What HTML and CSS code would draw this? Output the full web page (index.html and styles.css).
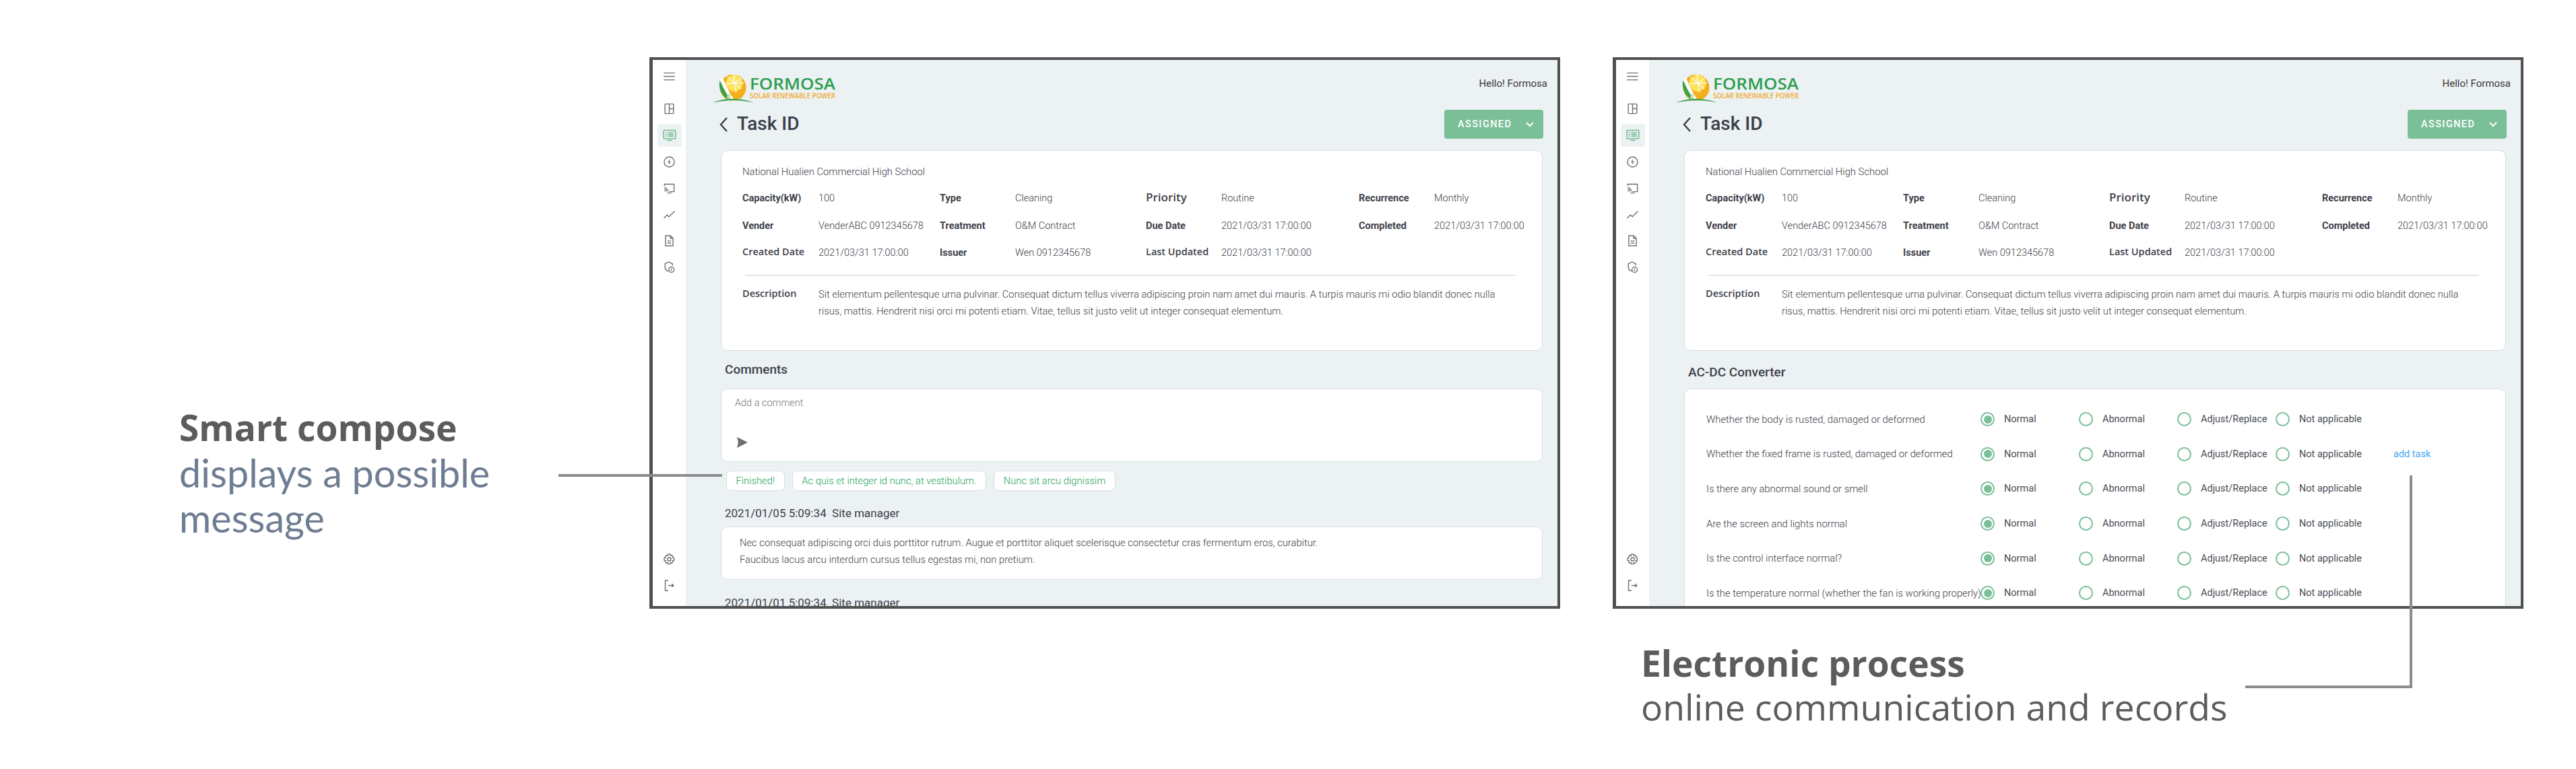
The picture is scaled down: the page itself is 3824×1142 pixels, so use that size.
FILE: index.html
```html
<!DOCTYPE html>
<html lang="en">
<head>
    <meta charset="UTF-8">
    <meta name="viewport" content="width=device-width, initial-scale=1.0">
    <title>Formosa task screens</title>
    <link rel="stylesheet" href="styles.css">
</head>
<body>
    <svg class="defs" width="0" height="0">
        <defs>
            <symbol id="i-menu" viewBox="0 0 24 24"><path d="M1.500 5.500h21M1.500 12h21M1.500 18.500h21"/></symbol>
            <symbol id="i-panel" viewBox="0 0 24 24"><rect x="4" y="3" width="16" height="18" rx="1.500"/><path d="M12 3v18M12 12h8"/></symbol>
            <symbol id="i-list" viewBox="0 0 24 24"><rect x="1.500" y="3" width="21" height="15" rx="1"/><path d="M8 21h8M5 7.500h2M9 7.500h10M5 10.500h2M9 10.500h10M5 13.500h2M9 13.500h10"/></symbol>
            <symbol id="i-bolt" viewBox="0 0 24 24"><circle cx="12" cy="12" r="9.500"/><path class="solid" d="M13 6l-4 7h3l-1 5 4-7h-3z"/></symbol>
            <symbol id="i-cast" viewBox="0 0 24 24"><path d="M3 8V4.500h18v14h-9"/><path d="M8 21h8M3 11a7.500 7.500 0 0 1 7 7M3 14a4.500 4.500 0 0 1 4 4"/><circle class="solid" cx="3.800" cy="17.500" r="1"/></symbol>
            <symbol id="i-chart" viewBox="0 0 24 24"><path d="M2 19l6-6 3.500 3L22 6"/></symbol>
            <symbol id="i-doc" viewBox="0 0 24 24"><path d="M5 2.500h9l5 5v14H5zM14 2.500v5h5M8.500 12.500h7M8.500 16.500h7"/></symbol>
            <symbol id="i-shield" viewBox="0 0 24 24"><path d="M11 20c-4-1-7-4-7-9V6l7-3.500L18 6v3"/><circle cx="16" cy="17" r="5"/><path d="M16 15v4"/></symbol>
            <symbol id="i-gear" viewBox="0 0 24 24"><circle cx="12" cy="12" r="3.200"/><path d="M10 2.500h4l.6 2.800 2-.9 2.700 2.700-1.100 2 2.800.9v4l-2.800.6.900 2.200-2.700 2.700-2-1.100-.6 2.600h-4l-.7-2.600-2.100 1.100-2.700-2.700 1-2.200-2.800-.6v-4l2.800-.9-1-2 2.700-2.700 2.100.9z"/></symbol>
            <symbol id="i-exit" viewBox="0 0 24 24"><path d="M10 2.500H4.500v19H10M10 12h10M17 9l3 3-3 3"/></symbol>
            <symbol id="i-logo" viewBox="0 0 64 44">
                <circle cx="31" cy="20" r="20.500" fill="#f4ad1c"/>
                <circle cx="33" cy="13" r="13" fill="#fde25a"/>
                <path class="rays" d="M33 13L33-1M33 13L45 5M33 13L48 13M33 13L44 22M33 13L36 28M33 13L22 3M33 13L20 14"/>
                <path fill="#39a349" d="M10.500 9C8 19 12 33 25 39.500L30 40C22 30 16 19 10.500 9z"/>
                <path fill="#fff" d="M10.500 7L15 4.500C21 19 27 31 34 40h-5C21 31 15 19 10.500 7z"/>
                <path fill="#bfe0b9" d="M22 37c-1-4 1-7 4-8 2 3 1 7-1 9z"/>
                <path fill="#39a349" d="M0 43.500C18 35 46 36 63 43.500 44 38.500 20 38.500 0 43.500z"/>
            </symbol>
        </defs>
    </svg>

    <div class="stage">
        <section class="intro">
            <h2 class="cap-title">Smart compose</h2>
            <p class="cap-text">displays a possible message</p>
        </section>

        <!-- comments screen -->
        <div class="window">
            <nav class="sidebar">
                <div class="nav-item"><svg class="icon"><use href="#i-menu"/></svg></div>
                <div class="nav-item first"><svg class="icon"><use href="#i-panel"/></svg></div>
                <div class="nav-item active"><svg class="icon"><use href="#i-list"/></svg></div>
                <div class="nav-item"><svg class="icon"><use href="#i-bolt"/></svg></div>
                <div class="nav-item"><svg class="icon"><use href="#i-cast"/></svg></div>
                <div class="nav-item"><svg class="icon"><use href="#i-chart"/></svg></div>
                <div class="nav-item"><svg class="icon"><use href="#i-doc"/></svg></div>
                <div class="nav-item"><svg class="icon"><use href="#i-shield"/></svg></div>
                <div class="nav-item settings"><svg class="icon"><use href="#i-gear"/></svg></div>
                <div class="nav-item"><svg class="icon"><use href="#i-exit"/></svg></div>
            </nav>
            <main class="main">
                <header class="topbar">
                    <div class="logo">
                        <svg class="logo-mark"><use href="#i-logo"/></svg>
                        <svg class="logo-words" viewBox="0 -10 150 46">
                            <text class="logo-name" x="0" y="18" textLength="127" lengthAdjust="spacingAndGlyphs">FORMOSA</text>
                            <text class="logo-sub" x="0" y="31" textLength="127" lengthAdjust="spacingAndGlyphs">SOLAR RENEWABLE POWER</text>
                        </svg>
                    </div>
                    <span class="hello">Hello! Formosa</span>
                </header>
                <div class="title-row">
                    <h1 class="page-title"><svg class="back" viewBox="0 0 14 24"><path d="M12 2L3 12l9 10"/></svg>Task ID</h1>
                    <button class="status">ASSIGNED<svg class="caret" viewBox="0 0 14 10"><path d="M2 2l5 5 5-5"/></svg></button>
                </div>
                <section class="card info">
                    <p class="site">National Hualien Commercial High School</p>
                    <div class="facts">
                        <span class="label">Capacity(kW)</span><span class="value">100</span>
                        <span class="label">Type</span><span class="value">Cleaning</span>
                        <span class="label alt big">Priority</span><span class="value">Routine</span>
                        <span class="label">Recurrence</span><span class="value">Monthly</span>
                        <span class="label">Vender</span><span class="value">VenderABC 0912345678</span>
                        <span class="label">Treatment</span><span class="value">O&amp;M Contract</span>
                        <span class="label">Due Date</span><span class="value">2021/03/31 17:00:00</span>
                        <span class="label">Completed</span><span class="value">2021/03/31 17:00:00</span>
                        <span class="label alt">Created Date</span><span class="value">2021/03/31 17:00:00</span>
                        <span class="label">Issuer</span><span class="value">Wen 0912345678</span>
                        <span class="label alt">Last Updated</span><span class="value">2021/03/31 17:00:00</span>
                    </div>
                    <hr class="rule">
                    <div class="desc">
                        <span class="label alt">Description</span>
                        <p class="value">Sit elementum pellentesque urna pulvinar. Consequat dictum tellus viverra adipiscing proin nam amet dui mauris. A turpis mauris mi odio blandit donec nulla<br>risus, mattis. Hendrerit nisi orci mi potenti etiam. Vitae, tellus sit justo velit ut integer consequat elementum.</p>
                    </div>
                </section>
                <h3 class="section-title">Comments</h3>
                <section class="card composer">
                    <p class="placeholder">Add a comment</p>
                    <svg class="send" viewBox="0 0 16 16"><path d="M0 0l16 8L0 16l2-8z"/></svg>
                </section>
                <div class="chips">
                    <span class="chip">Finished!</span>
                    <span class="chip">Ac quis et integer id nunc, at vestibulum.</span>
                    <span class="chip">Nunc sit arcu dignissim</span>
                </div>
                <p class="byline">2021/01/05 5:09:34&nbsp; Site manager</p>
                <section class="card comment">
                    <p class="value">Nec consequat adipiscing orci duis porttitor rutrum. Augue et porttitor aliquet scelerisque consectetur cras fermentum eros, curabitur.<br>Faucibus lacus arcu interdum cursus tellus egestas mi, non pretium.</p>
                </section>
                <p class="byline next">2021/01/01 5:09:34&nbsp; Site manager</p>
            </main>
        </div>

        <!-- checklist screen -->
        <div class="second">
            <div class="window">
                <nav class="sidebar">
                    <div class="nav-item"><svg class="icon"><use href="#i-menu"/></svg></div>
                    <div class="nav-item first"><svg class="icon"><use href="#i-panel"/></svg></div>
                    <div class="nav-item active"><svg class="icon"><use href="#i-list"/></svg></div>
                    <div class="nav-item"><svg class="icon"><use href="#i-bolt"/></svg></div>
                    <div class="nav-item"><svg class="icon"><use href="#i-cast"/></svg></div>
                    <div class="nav-item"><svg class="icon"><use href="#i-chart"/></svg></div>
                    <div class="nav-item"><svg class="icon"><use href="#i-doc"/></svg></div>
                    <div class="nav-item"><svg class="icon"><use href="#i-shield"/></svg></div>
                    <div class="nav-item settings"><svg class="icon"><use href="#i-gear"/></svg></div>
                    <div class="nav-item"><svg class="icon"><use href="#i-exit"/></svg></div>
                </nav>
                <main class="main">
                    <header class="topbar">
                        <div class="logo">
                            <svg class="logo-mark"><use href="#i-logo"/></svg>
                            <svg class="logo-words" viewBox="0 -10 150 46">
                                <text class="logo-name" x="0" y="18" textLength="127" lengthAdjust="spacingAndGlyphs">FORMOSA</text>
                                <text class="logo-sub" x="0" y="31" textLength="127" lengthAdjust="spacingAndGlyphs">SOLAR RENEWABLE POWER</text>
                            </svg>
                        </div>
                        <span class="hello">Hello! Formosa</span>
                    </header>
                    <div class="title-row">
                        <h1 class="page-title"><svg class="back" viewBox="0 0 14 24"><path d="M12 2L3 12l9 10"/></svg>Task ID</h1>
                        <button class="status">ASSIGNED<svg class="caret" viewBox="0 0 14 10"><path d="M2 2l5 5 5-5"/></svg></button>
                    </div>
                    <section class="card info">
                        <p class="site">National Hualien Commercial High School</p>
                        <div class="facts">
                            <span class="label">Capacity(kW)</span><span class="value">100</span>
                            <span class="label">Type</span><span class="value">Cleaning</span>
                            <span class="label alt big">Priority</span><span class="value">Routine</span>
                            <span class="label">Recurrence</span><span class="value">Monthly</span>
                            <span class="label">Vender</span><span class="value">VenderABC 0912345678</span>
                            <span class="label">Treatment</span><span class="value">O&amp;M Contract</span>
                            <span class="label">Due Date</span><span class="value">2021/03/31 17:00:00</span>
                            <span class="label">Completed</span><span class="value">2021/03/31 17:00:00</span>
                            <span class="label alt">Created Date</span><span class="value">2021/03/31 17:00:00</span>
                            <span class="label">Issuer</span><span class="value">Wen 0912345678</span>
                            <span class="label alt">Last Updated</span><span class="value">2021/03/31 17:00:00</span>
                        </div>
                        <hr class="rule">
                        <div class="desc">
                            <span class="label alt">Description</span>
                            <p class="value">Sit elementum pellentesque urna pulvinar. Consequat dictum tellus viverra adipiscing proin nam amet dui mauris. A turpis mauris mi odio blandit donec nulla<br>risus, mattis. Hendrerit nisi orci mi potenti etiam. Vitae, tellus sit justo velit ut integer consequat elementum.</p>
                        </div>
                    </section>
                    <h3 class="section-title lower">AC-DC Converter</h3>
                    <section class="card checklist">
                        <div class="check-row">
                            <span class="question">Whether the body is rusted, damaged or deformed</span>
                            <span class="option"><i class="radio on"></i>Normal</span>
                            <span class="option"><i class="radio"></i>Abnormal</span>
                            <span class="option"><i class="radio"></i>Adjust/Replace</span>
                            <span class="option"><i class="radio"></i>Not applicable</span>
                        </div>
                        <div class="check-row">
                            <span class="question">Whether the fixed frame is rusted, damaged or deformed</span>
                            <span class="option"><i class="radio on"></i>Normal</span>
                            <span class="option"><i class="radio"></i>Abnormal</span>
                            <span class="option"><i class="radio"></i>Adjust/Replace</span>
                            <span class="option"><i class="radio"></i>Not applicable</span>
                            <a class="add-task">add task</a>
                        </div>
                        <div class="check-row">
                            <span class="question">Is there any abnormal sound or smell</span>
                            <span class="option"><i class="radio on"></i>Normal</span>
                            <span class="option"><i class="radio"></i>Abnormal</span>
                            <span class="option"><i class="radio"></i>Adjust/Replace</span>
                            <span class="option"><i class="radio"></i>Not applicable</span>
                        </div>
                        <div class="check-row">
                            <span class="question">Are the screen and lights normal</span>
                            <span class="option"><i class="radio on"></i>Normal</span>
                            <span class="option"><i class="radio"></i>Abnormal</span>
                            <span class="option"><i class="radio"></i>Adjust/Replace</span>
                            <span class="option"><i class="radio"></i>Not applicable</span>
                        </div>
                        <div class="check-row">
                            <span class="question">Is the control interface normal?</span>
                            <span class="option"><i class="radio on"></i>Normal</span>
                            <span class="option"><i class="radio"></i>Abnormal</span>
                            <span class="option"><i class="radio"></i>Adjust/Replace</span>
                            <span class="option"><i class="radio"></i>Not applicable</span>
                        </div>
                        <div class="check-row">
                            <span class="question">Is the temperature normal (whether the fan is working properly)</span>
                            <span class="option"><i class="radio on"></i>Normal</span>
                            <span class="option"><i class="radio"></i>Abnormal</span>
                            <span class="option"><i class="radio"></i>Adjust/Replace</span>
                            <span class="option"><i class="radio"></i>Not applicable</span>
                        </div>
                    </section>
                </main>
            </div>
            <div class="outro">
                <h2 class="cap-title">Electronic process</h2>
                <p class="cap-text plain">online communication and records</p>
            </div>
        </div>

        <!-- callout lines sit on top of the windows -->
        <div class="line line-left"></div>
        <div class="line line-right"></div>
    </div>
</body>
</html>
```

FILE: styles.css
```css
*{
    margin: 0;
    padding: 0;
    box-sizing: border-box;
}
body
{
    background-color: #fff;
    font-family: Roboto, sans-serif;
    color: #3d4149;
}
.defs
{
    position: absolute;
}
.stage
{
    position: relative;
    width: 3824px;
    height: 1142px;
    padding: 85px 0 0 266px;
    display: flex;
    align-items: flex-start;
    overflow: hidden;
}

/* captions */
.intro
{
    width: 698px;
    padding-top: 516px;
}
.outro
{
    padding: 47px 0 0 42px;
}
.cap-title
{
    font-family: "Open Sans", sans-serif;
    font-size: 53.300px;
    font-weight: 700;
    line-height: 67px;
    color: #5c5c5c;
}
.cap-text
{
    font-family: Lato, sans-serif;
    font-size: 57.500px;
    font-weight: 400;
    line-height: 67px;
    width: 490px;
    color: #6f7d93;
}
.cap-text.plain
{
    font-family: "Open Sans", sans-serif;
    font-weight: 400;
    font-size: 53.500px;
    line-height: 64px;
    width: auto;
    white-space: nowrap;
    color: #5c5c5c;
}

/* app window */
.second
{
    margin-left: 78px;
}
.window
{
    width: 1352px;
    height: 819px;
    border: solid #505050;
    border-width: 4px 4px 4px 5px;
    display: flex;
    overflow: hidden;
    background-color: #ecf1f4;
}
.sidebar
{
    width: 49px;
    flex: none;
    background-color: #fff;
    display: flex;
    flex-direction: column;
    align-items: center;
    padding: 5px 0 11px 0;
}
.nav-item
{
    width: 36px;
    height: 39px;
    display: flex;
    align-items: center;
    justify-content: center;
    border-radius: 4px;
}
.nav-item.first
{
    margin-top: 9px;
}
.nav-item.active
{
    background-color: #ecf1f4;
    height: 34px;
    margin: 3px 0 0;
}
.nav-item.active + .nav-item
{
    margin-top: 3px;
}
.nav-item.settings
{
    margin-top: auto;
}
.icon
{
    width: 19px;
    height: 19px;
    fill: none;
    stroke: #707070;
    stroke-width: 1.8;
}
.nav-item.active .icon
{
    width: 20px;
    height: 20px;
    stroke: #6fb98a;
}
.solid
{
    fill: #707070;
    stroke: none;
}

.main
{
    flex: 1;
    min-width: 0;
    padding: 22px 15px 0 39px;
}
.topbar
{
    display: flex;
    justify-content: space-between;
    align-items: flex-start;
    height: 42px;
}
.logo
{
    display: flex;
    align-items: flex-start;
}
.logo-mark
{
    width: 64px;
    height: 42px;
}
.rays
{
    stroke: #fff;
    stroke-width: 1.2;
    fill: none;
}
.logo-words
{
    width: 150px;
    height: 46px;
    margin-left: -8px;
    margin-top: -6px;
}
.logo-name
{
    font-family: "Open Sans", sans-serif;
    font-size: 24px;
    font-weight: 600;
    fill: #2f9e4f;
}
.logo-sub
{
    font-family: "Open Sans", sans-serif;
    font-size: 10px;
    font-weight: 600;
    fill: #f0aa2e;
}
.hello
{
    font-size: 15px;
    line-height: 20px;
    margin-top: 3px;
    color: #3a3a3a;
}
.title-row
{
    display: flex;
    justify-content: space-between;
    align-items: center;
    margin-top: 10px;
    padding: 0 6px 0 10px;
}
.page-title
{
    display: flex;
    align-items: center;
    font-size: 28px;
    font-weight: 500;
    margin-bottom: 3px;
    color: #3a3f4a;
}
.back
{
    width: 14px;
    height: 24px;
    margin: 3px 13px 0 0;
    fill: none;
    stroke: #3a3f4a;
    stroke-width: 2.4;
}
.status
{
    width: 147px;
    height: 43px;
    border: 0;
    border-radius: 4px;
    background-color: #7bbf98;
    color: #fff;
    font-family: Roboto, sans-serif;
    font-size: 14.500px;
    font-weight: 500;
    letter-spacing: 1.400px;
    display: flex;
    align-items: center;
    padding-left: 20px;
}
.caret
{
    width: 14px;
    height: 10px;
    margin-left: 20px;
    fill: none;
    stroke: #fff;
    stroke-width: 2;
}

/* cards */
.card
{
    background-color: #fff;
    border: 1px solid #d9dde0;
    border-radius: 10px;
    margin: 0 7px 0 13px;
}
.info
{
    margin-top: 17px;
    height: 298px;
    padding: 21px 0 0 31px;
}
.site
{
    font-weight: 300;
    font-size: 14.800px;
    line-height: 20px;
}
.label
{
    font-weight: 700;
    font-size: 14.500px;
    color: #3d4149;
}
.label.alt
{
    font-family: "Open Sans", sans-serif;
    font-weight: 600;
    font-size: 14.500px;
    position: relative;
    top: -2px;
}
.label.big
{
    font-size: 17px;
}
.value
{
    font-weight: 300;
    font-size: 14.500px;
    color: #3d4149;
    white-space: nowrap;
}
.facts
{
    display: grid;
    grid-template-columns: 113px 180px 112px 194px 112px 204px 112px 1fr;
    grid-auto-rows: 40.500px;
    align-items: center;
    margin-top: 9.500px;
}
.rule
{
    border: 0;
    border-top: 2px solid #e4e7e9;
    width: 1144px;
    margin: 12px 0 15px 4px;
}
.desc
{
    display: grid;
    grid-template-columns: 113px 1fr;
    line-height: 25px;
}
.desc .value, .comment .value
{
    font-size: 14.750px;
}
.section-title
{
    height: 28px;
    margin: 14px 0 14px 19px;
    font-size: 19px;
    font-weight: 500;
    line-height: 28px;
    color: #3d4149;
}
.section-title.lower
{
    padding-top: 4px;
}
.composer
{
    height: 109px;
    padding: 11px 0 0 20px;
    position: relative;
}
.placeholder
{
    font-weight: 300;
    font-size: 14.500px;
    line-height: 20px;
    color: #777;
}
.send
{
    display: block;
    width: 16px;
    height: 16px;
    margin: 40px 0 0 3px;
    fill: #6e6e6e;
}
.chips
{
    display: flex;
    gap: 11px;
    margin: 13px 0 0 21px;
}
.chip
{
    height: 30px;
    padding: 0 13.500px;
    background-color: #fff;
    border: 1px solid #d9dde0;
    border-radius: 7px;
    font-size: 14.750px;
    font-weight: 300;
    line-height: 28px;
    color: #25a45c;
}
.byline
{
    margin: 21px 0 8px 19px;
    font-size: 17px;
    line-height: 24px;
    color: #3d4149;
}
.byline.next
{
    margin-top: 22px;
}
.comment
{
    height: 79px;
    padding: 11px 0 0 27px;
    line-height: 25px;
}

/* checklist */
.checklist
{
    height: 400px;
    padding: 19px 0 0 32px;
}
.check-row
{
    display: grid;
    grid-template-columns: 407px 146px 146px 146px 175px auto;
    height: 51.600px;
    align-items: center;
    font-size: 14.500px;
}
.question
{
    font-weight: 300;
    font-size: 14.800px;
    white-space: nowrap;
}
.option
{
    display: flex;
    align-items: center;
    gap: 14px;
    color: #4a4e55;
}
.radio
{
    width: 21px;
    height: 21px;
    border: 2px solid #7bbf98;
    border-radius: 50%;
    display: flex;
    align-items: center;
    justify-content: center;
}
.radio.on::after
{
    content: "";
    width: 12px;
    height: 12px;
    border-radius: 50%;
    background-color: #7bbf98;
}
.add-task
{
    color: #4aa8f0;
    font-weight: 400;
}

/* callouts */
.line
{
    position: absolute;
}
.line-left
{
    left: 829px;
    top: 704px;
    width: 243px;
    height: 4px;
    background-color: #8c8c8c;
}
.line-right
{
    left: 3333px;
    top: 706px;
    width: 248px;
    height: 316px;
    border-right: 4px solid #8c8c8c;
    border-bottom: 4px solid #8c8c8c;
}
```
